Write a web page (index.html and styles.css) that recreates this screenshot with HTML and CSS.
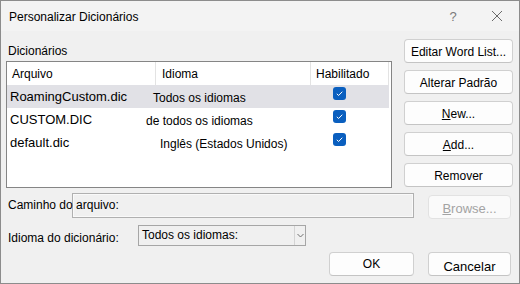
FILE: index.html
```html
<!DOCTYPE html>
<html lang="pt">
<head>
    <meta charset="UTF-8">
    <title>Personalizar Dicionários</title>
    <link rel="stylesheet" href="styles.css">
</head>
<body>
    <div class="dialog">
        <div class="titlebar">
            <span class="title">Personalizar Dicionários</span>
            <span class="help">?</span>
            <span class="close">
                <svg width="12" height="12" viewBox="0 0 12 12"><path d="M1 1L11 11M11 1L1 11" stroke="#6a6a6a" stroke-width="1" fill="none"/></svg>
            </span>
        </div>

        <div class="top">
            <div class="dicts">
                <div class="group-label">Dicionários</div>
                <div class="listbox">
                    <div class="list-head">
                        <div class="hcell col-file">Arquivo</div>
                        <div class="hcell col-lang">Idioma</div>
                        <div class="hcell col-on">Habilitado</div>
                    </div>
                    <div class="list-row selected">
                        <div class="cell-file">RoamingCustom.dic</div>
                        <div class="cell-lang lang-a">Todos os idiomas</div>
                        <div class="cell-on"><span class="check"><svg width="13" height="13" viewBox="0 0 13 13"><path d="M3.8 6.8L5.6 8.5L9.3 4.7" stroke="#fff" stroke-width="1" fill="none"/></svg></span></div>
                    </div>
                    <div class="list-row">
                        <div class="cell-file">CUSTOM.DIC</div>
                        <div class="cell-lang lang-b">de todos os idiomas</div>
                        <div class="cell-on"><span class="check"><svg width="13" height="13" viewBox="0 0 13 13"><path d="M3.8 6.8L5.6 8.5L9.3 4.7" stroke="#fff" stroke-width="1" fill="none"/></svg></span></div>
                    </div>
                    <div class="list-row">
                        <div class="cell-file">default.dic</div>
                        <div class="cell-lang lang-c">Inglês (Estados Unidos)</div>
                        <div class="cell-on"><span class="check"><svg width="13" height="13" viewBox="0 0 13 13"><path d="M3.8 6.8L5.6 8.5L9.3 4.7" stroke="#fff" stroke-width="1" fill="none"/></svg></span></div>
                    </div>
                </div>
            </div>

            <div class="side-buttons">
                <button class="btn">Editar Word List...</button>
                <button class="btn">Alterar Padrão</button>
                <button class="btn"><u>N</u>ew...</button>
                <button class="btn"><u>A</u>dd...</button>
                <button class="btn">Remover</button>
            </div>
        </div>

        <div class="path-row">
            <span class="path-label">Caminho do arquivo:</span>
            <div class="path-field"></div>
            <button class="btn browse" disabled><u>B</u>rowse...</button>
        </div>

        <div class="lang-row">
            <span class="lang-label">Idioma do dicionário:</span>
            <div class="select">
                <span class="select-text">Todos os idiomas:</span>
                <span class="select-arrow">
                    <svg width="7" height="5" viewBox="0 0 7 5"><path d="M0.5 1L3.5 4L6.5 1" stroke="#707070" stroke-width="1" fill="none"/></svg>
                </span>
            </div>
        </div>

        <div class="actions">
            <button class="btn ok">OK</button>
            <button class="btn cancel">Cancelar</button>
        </div>
    </div>
</body>
</html>
```

FILE: styles.css
```css
body { margin: 0; }
.dialog {
    width: 520px;
    height: 284px;
    box-sizing: border-box;
    border: 1px solid #8c8c8c;
    background-color: #f0f0f0;
    font-family: "Liberation Sans", Arial, sans-serif;
    font-size: 12px;
    color: #000;
}
.titlebar { height: 30px; display: flex; align-items: center; background-color: #f3f3f3; padding-left: 8px; padding-right: 12px; }
.title { flex: 1; padding-top: 1px; }
.help { width: 20px; text-align: center; color: #7a7a7a; font-size: 13px; margin-right: 24px; }
.close { width: 20px; height: 12px; display: flex; justify-content: center; }

.top { display: flex; padding-left: 5px; }
.dicts { width: 386px; }
.group-label { height: 30px; box-sizing: border-box; padding: 12px 0 0 2px; line-height: 16px; }
.listbox { height: 127px; box-sizing: border-box; border: 1px solid #858585; background-color: #fff; }
.list-head { display: flex; height: 23px; }
.hcell { box-sizing: border-box; height: 23px; padding: 4px 0 0 5px; line-height: 17px; border-right: 1px solid #e3e3e3; }
.col-file { width: 149px; }
.col-lang { width: 155px; padding-left: 6px; }
.col-on { width: 78px; }

.list-row { display: flex; height: 23px; width: 382px; align-items: flex-start; }
.list-row.selected { background-color: #e1e1e6; }
.cell-file { width: 136px; padding-left: 3px; font-size: 13px; line-height: 23px; }
.cell-lang { width: 165px; box-sizing: border-box; padding-top: 3px; line-height: 20px; white-space: nowrap; }
.lang-a { padding-left: 7px; }
.lang-b { padding-left: 0; }
.lang-c { padding-left: 14px; }
.cell-on { width: 78px; }
.check { display: block; width: 13px; height: 13px; margin: 2px 0 0 22px; background-color: #0a5fbf; border-radius: 3px; }
.check svg { display: block; }

.side-buttons { width: 109px; margin-left: 12px; padding-top: 8px; display: flex; flex-direction: column; gap: 7px; }
.btn {
    height: 24px;
    box-sizing: border-box;
    border: 1px solid #d0d0d0;
    border-bottom-color: #c4c4c4;
    border-radius: 4px;
    background-color: #fdfdfd;
    font-family: inherit;
    font-size: 12px;
    color: #000;
    padding: 2px 0 0 0;
    text-align: center;
    white-space: nowrap;
}

.path-row { display: flex; align-items: flex-start; margin-top: 5px; padding-left: 7px; }
.path-label { width: 64px; white-space: nowrap; position: relative; z-index: 1; line-height: 25px; }
.path-field { width: 342px; height: 25px; box-sizing: border-box; border: 1px solid #b0b0b0; background-color: #f0f0f0; box-shadow: inset 0 0 0 1px #f9f9f9; }
.browse { width: 83px; margin: 2px 0 0 14px; color: #a3a3a3; border-color: #e2e2e2; background-color: #fafafa; font-size: 13px; }

.lang-row { display: flex; align-items: flex-start; height: 21px; margin-top: 6px; padding-left: 7px; }
.lang-label { width: 130px; line-height: 21px; padding-top: 3px; }
.select { width: 168px; height: 21px; box-sizing: border-box; border: 1px solid #a6a6a6; background-color: #f0f0f0; display: flex; }
.select-text { flex: 1; padding: 1px 0 0 3px; line-height: 17px; }
.select-arrow { width: 10px; border-left: 1px solid #d4d4d4; display: flex; align-items: center; justify-content: center; }
.select-arrow svg { display: block; }

.actions { display: flex; justify-content: flex-end; gap: 14px; margin-top: 6px; padding-right: 8px; }
.ok { width: 85px; padding-top: 0; }
.cancel { width: 83px; padding-top: 5px; font-size: 13px; }
```
